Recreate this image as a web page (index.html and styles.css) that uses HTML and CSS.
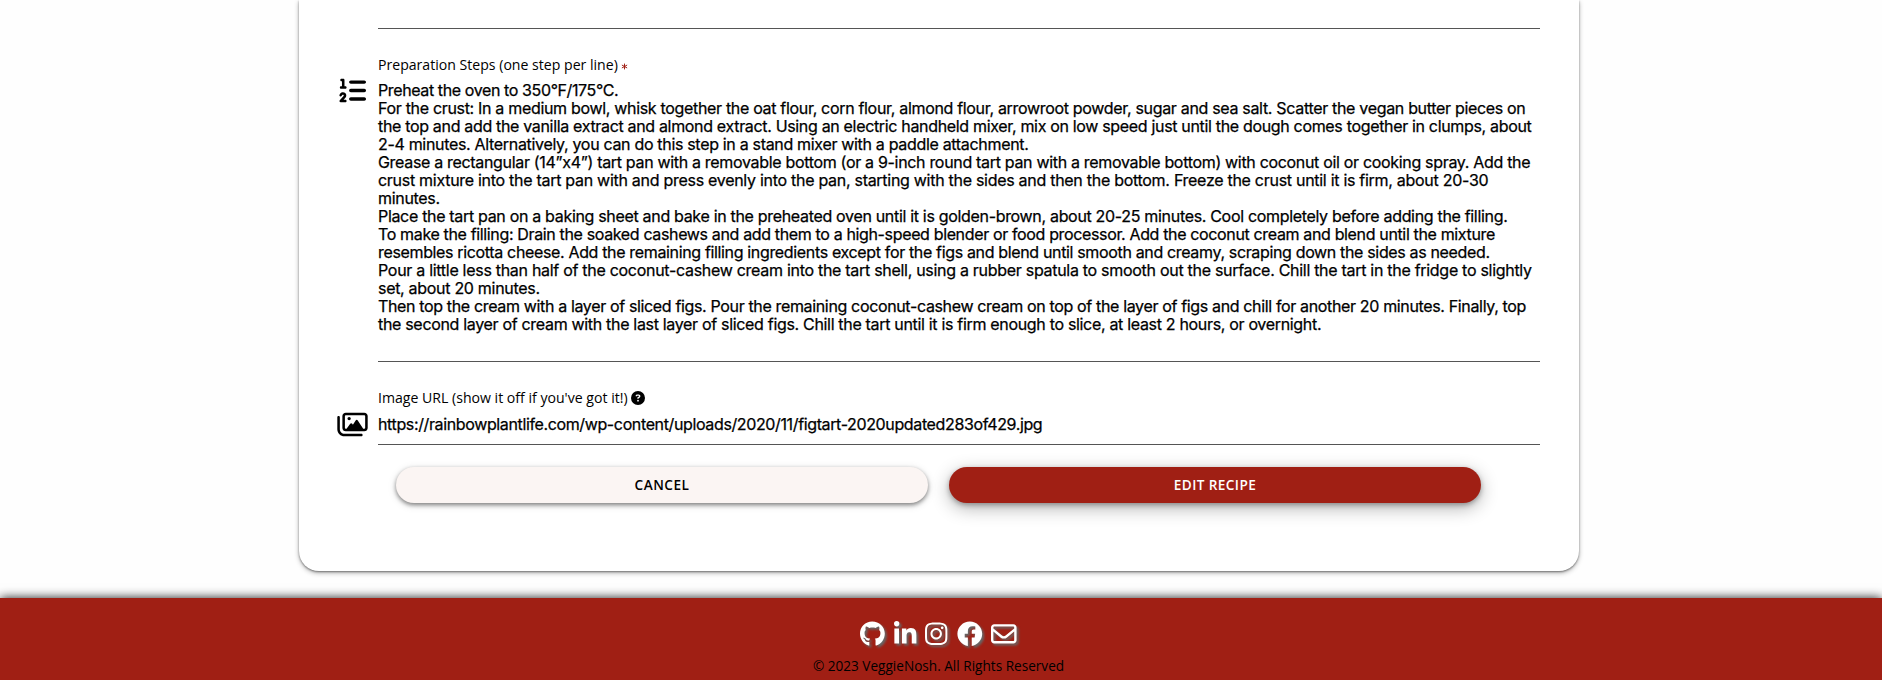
FILE: index.html
```html
<!DOCTYPE html>
<html lang="en">
<head>
<meta charset="utf-8">
<title>VeggieNosh</title>
<link rel="stylesheet" href="styles.css">
</head>
<body>
<main class="card">
  <div class="field field-previous"></div>
  <div class="field field-steps">
    <svg class="prefix prefix-list" viewBox="0 0 512 512"><path d="M24 56c0-13.300 10.700-24 24-24h32c13.300 0 24 10.700 24 24v120h16c13.300 0 24 10.700 24 24s-10.700 24-24 24H40c-13.300 0-24-10.700-24-24s10.700-24 24-24h16V80H48C34.700 80 24 69.300 24 56zM86.700 341.200c-6.500-7.400-18.300-6.900-24 1.200L51.500 357.900c-7.700 10.800-22.700 13.300-33.500 5.600s-13.300-22.700-5.600-33.500l11.100-15.600c23.700-33.200 72.300-35.600 99.200-4.900c21.300 24.400 20.800 60.900-1.100 84.700L86.800 432H120c13.300 0 24 10.700 24 24s-10.700 24-24 24H32c-9.500 0-18.200-5.600-22-14.400s-2.100-18.900 4.300-25.900l72-78c5.300-5.800 5.400-14.600 .3-20.500zM224 64H480c17.700 0 32 14.300 32 32s-14.300 32-32 32H224c-17.700 0-32-14.300-32-32s14.300-32 32-32zm0 160H480c17.700 0 32 14.300 32 32s-14.300 32-32 32H224c-17.700 0-32-14.300-32-32s14.300-32 32-32zm0 160H480c17.700 0 32 14.300 32 32s-14.300 32-32 32H224c-17.700 0-32-14.300-32-32s14.300-32 32-32z"/></svg>
    <div class="control">
      <div class="label">Preparation Steps (one step per line) <svg class="required" viewBox="0 0 12 12"><path d="M6 1v10M1.500 3.500l9 5M10.500 3.500l-9 5"/></svg></div>
      <div class="value steps">
        <span class="l1">Preheat the oven to 350°F/175°C.</span>
        <span class="l2">For the crust: In a medium bowl, whisk together the oat flour, corn flour, almond flour, arrowroot powder, sugar and sea salt. Scatter the vegan butter pieces on</span>
        <span class="l3">the top and add the vanilla extract and almond extract. Using an electric handheld mixer, mix on low speed just until the dough comes together in clumps, about</span>
        <span class="l4">2-4 minutes. Alternatively, you can do this step in a stand mixer with a paddle attachment.</span>
        <span class="l5">Grease a rectangular (14”x4”) tart pan with a removable bottom (or a 9-inch round tart pan with a removable bottom) with coconut oil or cooking spray. Add the</span>
        <span class="l6">crust mixture into the tart pan with and press evenly into the pan, starting with the sides and then the bottom. Freeze the crust until it is firm, about 20-30</span>
        <span class="l7">minutes.</span>
        <span class="l8">Place the tart pan on a baking sheet and bake in the preheated oven until it is golden-brown, about 20-25 minutes. Cool completely before adding the filling.</span>
        <span class="l9">To make the filling: Drain the soaked cashews and add them to a high-speed blender or food processor. Add the coconut cream and blend until the mixture</span>
        <span class="l10">resembles ricotta cheese. Add the remaining filling ingredients except for the figs and blend until smooth and creamy, scraping down the sides as needed.</span>
        <span class="l11">Pour a little less than half of the coconut-cashew cream into the tart shell, using a rubber spatula to smooth out the surface. Chill the tart in the fridge to slightly</span>
        <span class="l12">set, about 20 minutes.</span>
        <span class="l13">Then top the cream with a layer of sliced figs. Pour the remaining coconut-cashew cream on top of the layer of figs and chill for another 20 minutes. Finally, top</span>
        <span class="l14">the second layer of cream with the last layer of sliced figs. Chill the tart until it is firm enough to slice, at least 2 hours, or overnight.</span>
      </div>
    </div>
  </div>
  <div class="field field-image">
    <svg class="prefix prefix-images" viewBox="0 0 576 512"><path d="M160 80H512c8.800 0 16 7.200 16 16V320c0 8.800-7.200 16-16 16H490.800L388.100 178.900c-4.400-6.800-12-10.900-20.100-10.900s-15.700 4.100-20.100 10.900l-52.200 79.800-12.400-16.900c-4.500-6.200-11.700-9.800-19.400-9.800s-14.800 3.600-19.400 9.800L175.600 336H160c-8.800 0-16-7.200-16-16V96c0-8.800 7.200-16 16-16zM96 96V320c0 35.300 28.700 64 64 64H512c35.300 0 64-28.700 64-64V96c0-35.300-28.700-64-64-64H160c-35.300 0-64 28.700-64 64zM48 120c0-13.300-10.700-24-24-24S0 106.700 0 120V344c0 75.100 60.900 136 136 136H456c13.300 0 24-10.700 24-24s-10.700-24-24-24H136c-48.600 0-88-39.400-88-88V120zm208 24a32 32 0 1 0 -64 0 32 32 0 1 0 64 0z"/></svg>
    <div class="control">
      <div class="label label-image">Image URL (show it off if you've got it!) <svg class="help" viewBox="0 0 512 512"><path d="M256 512A256 256 0 1 0 256 0a256 256 0 1 0 0 512zM169.800 165.300c7.900-22.300 29.100-37.300 52.800-37.300h58.300c34.900 0 63.100 28.300 63.100 63.100c0 22.600-12.100 43.500-31.700 54.800L280 264.400c-.2 13-10.900 23.600-24 23.600c-13.300 0-24-10.700-24-24V250.500c0-8.600 4.600-16.500 12.100-20.800l44.300-25.400c4.700-2.700 7.600-7.700 7.600-13.100c0-8.400-6.800-15.100-15.100-15.100H222.600c-3.400 0-6.400 2.100-7.500 5.300l-.4 1.200c-4.400 12.500-18.200 19-30.600 14.600s-19-18.200-14.600-30.600l.4-1.200zM224 352a32 32 0 1 1 64 0 32 32 0 1 1 -64 0z"/></svg></div>
      <div class="value url"><span>https://rainbowplantlife.com/wp-content/uploads/2020/11/figtart-2020updated283of429.jpg</span></div>
    </div>
  </div>
  <div class="actions">
    <a class="btn btn-cancel">CANCEL</a>
    <a class="btn btn-edit">EDIT RECIPE</a>
  </div>
</main>
<footer class="footer">
  <div class="social">
    <svg class="w496" viewBox="0 0 496 512"><path d="M165.900 397.400c0 2-2.300 3.600-5.200 3.600-3.300.3-5.600-1.300-5.600-3.600 0-2 2.300-3.600 5.200-3.600 3-.3 5.600 1.300 5.600 3.600zM244.800 8C106.100 8 0 113.300 0 252c0 110.900 69.800 205.800 169.500 239.200 12.800 2.300 17.300-5.600 17.300-12.100 0-6.200-.3-40.400-.3-61.400 0 0-70 15-84.700-29.800 0 0-11.400-29.100-27.800-36.600 0 0-22.900-15.700 1.600-15.400 0 0 24.900 2 38.600 25.800 21.900 38.600 58.600 27.500 72.900 20.900 2.300-16 8.800-27.100 16-33.700-55.900-6.200-112.300-14.300-112.300-110.500 0-27.500 7.600-41.300 23.600-58.900-2.600-6.500-11.100-33.300 2.600-67.900 20.900-6.500 69 27 69 27 20-5.600 41.500-8.500 62.800-8.500s42.800 2.900 62.800 8.500c0 0 48.100-33.600 69-27 13.700 34.700 5.200 61.400 2.600 67.900 16 17.700 25.800 31.500 25.800 58.900 0 96.500-58.900 104.200-114.800 110.500 9.200 7.900 17 22.900 17 46.400 0 33.700-.3 75.400-.3 83.600 0 6.500 4.600 14.400 17.300 12.100C428.200 457.800 496 362.900 496 252 496 113.300 383.500 8 244.800 8z"/></svg>
    <svg class="w448" viewBox="0 0 448 512"><path d="M100.280 448H7.400V148.900h92.880zM53.790 108.100C24.090 108.100 0 83.500 0 53.800a53.790 53.790 0 0 1 107.580 0c0 29.700-24.100 54.300-53.790 54.300zM447.900 448h-92.680V302.400c0-34.700-.7-79.200-48.290-79.200-48.290 0-55.690 37.700-55.690 76.700V448h-92.780V148.900h89.080v40.800h1.300c12.400-23.500 42.690-48.300 87.880-48.300 94 0 111.280 61.900 111.280 142.300V448z"/></svg>
    <svg class="w448" viewBox="0 0 448 512"><path d="M224.100 141c-63.600 0-114.900 51.300-114.900 114.900s51.300 114.900 114.900 114.900S339 319.500 339 255.900 287.700 141 224.100 141zm0 189.600c-41.100 0-74.700-33.500-74.700-74.700s33.500-74.700 74.700-74.700 74.700 33.500 74.700 74.700-33.600 74.700-74.700 74.700zm146.400-194.300c0 14.900-12 26.800-26.800 26.800-14.900 0-26.800-12-26.800-26.800s12-26.800 26.800-26.800 26.800 12 26.800 26.800zm76.100 27.200c-1.700-35.900-9.900-67.700-36.200-93.900-26.200-26.200-58-34.400-93.900-36.200-37-2.100-147.900-2.100-184.900 0-35.800 1.700-67.600 9.900-93.900 36.100s-34.400 58-36.200 93.900c-2.100 37-2.100 147.900 0 184.900 1.700 35.900 9.900 67.700 36.200 93.900s58 34.400 93.900 36.200c37 2.100 147.900 2.100 184.900 0 35.900-1.700 67.700-9.900 93.900-36.200 26.200-26.200 34.400-58 36.200-93.900 2.100-37 2.100-147.800 0-184.800zM398.800 388c-7.800 19.600-22.900 34.700-42.600 42.600-29.500 11.700-99.500 9-132.100 9s-102.700 2.600-132.100-9c-19.600-7.800-34.700-22.900-42.600-42.600-11.700-29.500-9-99.500-9-132.100s-2.600-102.700 9-132.100c7.800-19.600 22.900-34.700 42.600-42.600 29.500-11.700 99.500-9 132.100-9s102.700-2.600 132.100 9c19.600 7.800 34.700 22.900 42.600 42.600 11.700 29.500 9 99.500 9 132.100s2.700 102.700-9 132.100z"/></svg>
    <svg class="w512" viewBox="0 0 512 512"><path d="M504 256C504 119 393 8 256 8S8 119 8 256c0 123.780 90.690 226.380 209.250 245V327.690h-63V256h63v-54.640c0-62.150 37-96.480 93.670-96.480 27.140 0 55.520 4.840 55.520 4.840v61h-31.280c-30.800 0-40.410 19.120-40.410 38.730V256h68.780l-11 71.690h-57.780V501C413.310 482.380 504 379.780 504 256z"/></svg>
    <svg class="w512" viewBox="0 0 512 512"><path d="M64 112c-8.800 0-16 7.200-16 16v22.100L220.500 291.700c20.700 17 50.400 17 71.100 0L464 150.100V128c0-8.800-7.200-16-16-16H64zM48 212.200V384c0 8.800 7.200 16 16 16H448c8.800 0 16-7.200 16-16V212.200L322 328.800c-38.400 31.500-93.700 31.500-132 0L48 212.200zM0 128C0 92.700 28.700 64 64 64H448c35.300 0 64 28.700 64 64V384c0 35.300-28.700 64-64 64H64c-35.300 0-64-28.700-64-64V128z"/></svg>
  </div>
  <div class="copyright">© 2023 VeggieNosh. All Rights Reserved</div>
</footer>
</body>
</html>
```
FILE: styles.css
```css
* { box-sizing: border-box; }
html, body { height: 100%; }
body {
  margin: 0;
  overflow: hidden;
  display: flex;
  flex-direction: column;
  background: #fefefe;
  color: #000;
  font-family: "Open Sans", "Noto Sans", sans-serif;
}
.card {
  flex: none;
  width: 1280px;
  height: 571px;
  margin-left: 299px;
  padding: 0 39px 0 38px;
  border-radius: 0 0 20px 20px;
  background: #fff;
  box-shadow: 0 1px 2px rgba(0,0,0,.4), 0 2px 5px rgba(0,0,0,.3);
}
.field { display: flex; }
.field-previous { height: 29px; margin-left: 41px; border-bottom: 1px solid #555; }
.prefix { flex: none; display: block; }
.prefix-list { width: 27px; height: 27px; margin: 48px 12px 0 2px; }
.prefix-images { width: 31px; height: 27px; margin: 49px 10px 0 0; }
.control { flex: 1; border-bottom: 1px solid #555; }
.field-steps { height: 333px; }
.field-image { height: 83px; }
.label {
  height: 20px;
  margin-top: 26px;
  line-height: 20px;
  font-size: 14.1px;
  font-weight: 500;
  white-space: nowrap;
}
.required { width: 7px; height: 7px; fill: none; stroke: #a01f14; stroke-width: 1.7; }
.help { width: 14px; height: 14px; vertical-align: -2px; }
.value {
  font-family: Inter, sans-serif;
  font-size: 16px;
  line-height: 18px;
  letter-spacing: -.32px;
  -webkit-text-stroke: .25px #000;
}
.steps { padding-top: 6px; }
.steps span { display: block; width: max-content; white-space: nowrap; }
.steps .l1 { letter-spacing: -.39px; }
.steps .l3 { letter-spacing: -.33px; }
.steps .l6 { letter-spacing: -.285px; }
.steps .l9 { letter-spacing: -.355px; }
.steps .l10 { letter-spacing: -.347px; }
.steps .l11 { letter-spacing: -.293px; }
.steps .l12 { letter-spacing: -.3px; }
.steps .l13 { letter-spacing: -.352px; }
.url { padding-top: 7px; letter-spacing: -.37px; }
.actions { display: flex; gap: 21px; margin: 22px 0 0 59px; }
.btn {
  width: 532px;
  height: 36px;
  border-radius: 18px;
  line-height: 36px;
  text-align: center;
  font-size: 13.6px;
  font-weight: 600;
  letter-spacing: .5px;
}
.btn-cancel { background: #fbf5f3; box-shadow: 0 2px 4px rgba(0,0,0,.45), 0 2px 10px rgba(0,0,0,.12); }
.btn-edit { background: #a01f14; color: #fff; letter-spacing: .4px; box-shadow: 0 2px 5px rgba(0,0,0,.3), 0 5px 18px rgba(0,0,0,.3); }
.footer {
  flex: none;
  height: 82px;
  margin-top: 27px;
  padding: 23px 5px 0 0;
  background: #a01f14;
  box-shadow: 0 0 10px rgba(0,0,0,.9);
}
.social { display: flex; justify-content: center; gap: 9px; height: 26px; fill: #fff; }
.social svg { height: 25.6px; overflow: visible; filter: drop-shadow(2px 2px 1px #666); }
.w496 { width: 24.8px; }
.w448 { width: 22.4px; }
.w512 { width: 25.6px; }
.copyright { margin-top: 9px; text-align: center; font-size: 13.6px; line-height: 20px; font-weight: 500; }
```
